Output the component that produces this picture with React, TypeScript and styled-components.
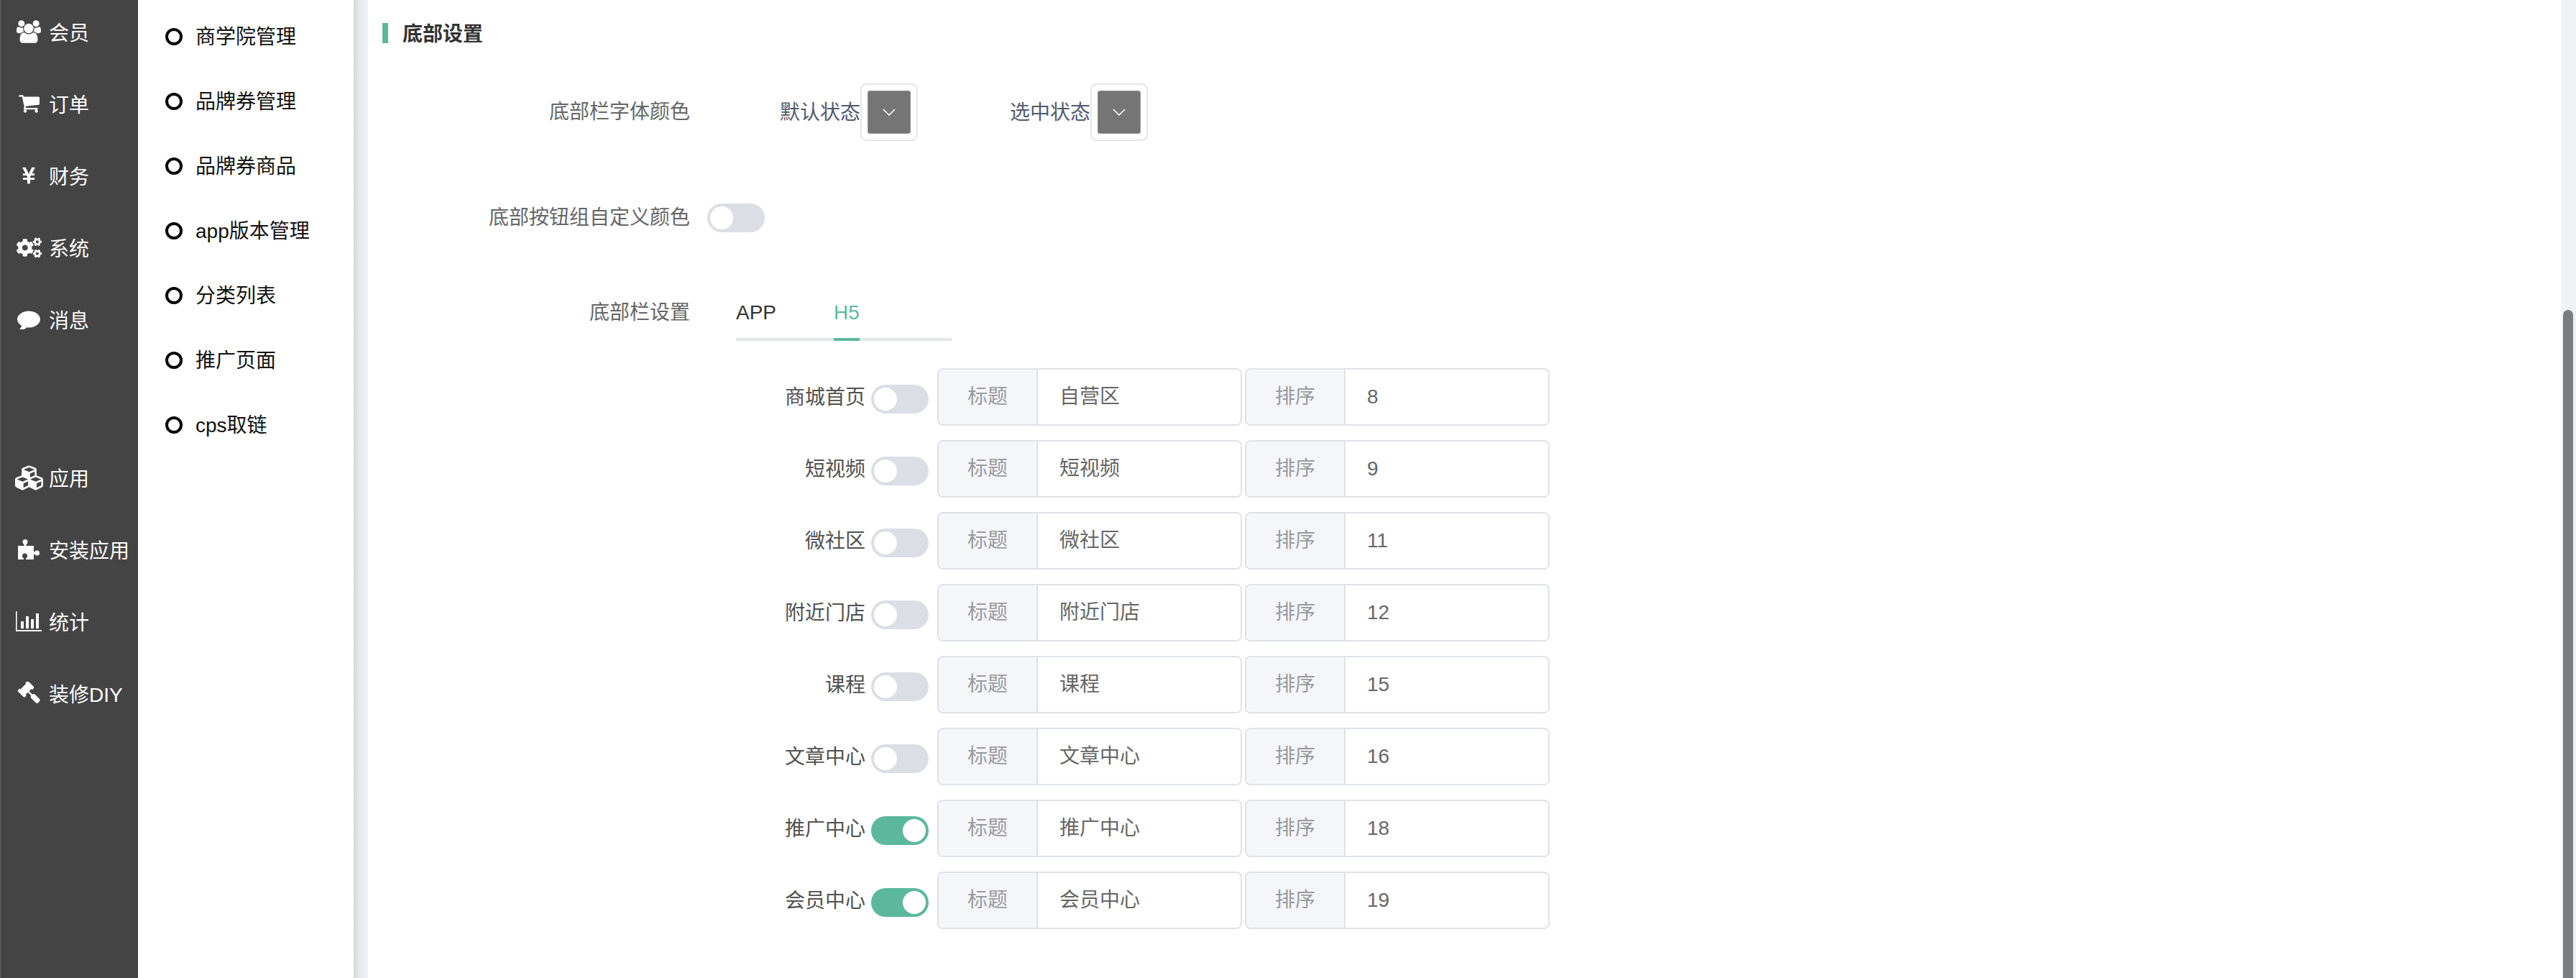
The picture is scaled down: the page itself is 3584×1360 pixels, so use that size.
import React from "react";
import styled, { createGlobalStyle } from "styled-components";
import { FaYenSign, FaCogs, FaCubes } from "react-icons/fa";

const GREEN = "#5bb89d";
const FONT = `"Liberation Sans", "Noto Sans CJK SC", sans-serif`;

const Global = createGlobalStyle`
  html, body { margin: 0; padding: 0; background: #fff; overflow: hidden; }
  * { box-sizing: border-box; }
  body { font-family: ${FONT}; font-size: 28px; }
`;

const Page = styled.div`
  display: flex;
  width: 3584px;
  height: 1360px;
  overflow: hidden;
`;

const Rail = styled.nav`
  flex: 0 0 192px;
  background: #444;
  border-left: 1px solid #666;
  color: #fff;
`;

const RailList = styled.div<{ $gap?: number }>`
  margin-top: ${(p) => p.$gap ?? -6}px;
`;

const RailItem = styled.div`
  display: flex;
  align-items: center;
  height: 100px;
  padding-left: 19px;
  font-size: 28px;
  white-space: nowrap;
`;

const RailIcon = styled.span`
  flex: 0 0 40px;
  display: flex;
  align-items: center;
  justify-content: center;
  margin-right: 8px;
  color: #fff;
`;

const SubNav = styled.nav`
  flex: 0 0 300px;
  background: #fff;
  padding-top: 6px;
`;

const SubItem = styled.div`
  display: flex;
  align-items: center;
  height: 90px;
  padding-left: 38px;
  color: #111;
  white-space: nowrap;
`;

const SubText = styled.span`
  position: relative;
  top: -2px;
`;

const Dot = styled.span`
  width: 24px;
  height: 24px;
  border: 4px solid #000;
  border-radius: 50%;
  margin-right: 18px;
`;

const Gutter = styled.div`
  flex: 0 0 20px;
  background: linear-gradient(90deg, #d6d8dc 0, #e7eaee 40%, #eef1f5 100%);
`;

const Main = styled.main`
  flex: 1;
  background: #fff;
  min-width: 0;
`;

const Title = styled.h2`
  margin: 32px 0 0 20px;
  height: 28px;
  line-height: 31px;
  border-left: 8px solid ${GREEN};
  padding-left: 20px;
  font-size: 28px;
  font-weight: 700;
  color: #333;
`;

const FormRow = styled.div<{ $top: number }>`
  display: flex;
  align-items: center;
  margin-top: ${(p) => p.$top}px;
`;

const FormLabel = styled.label<{ $tall?: boolean }>`
  flex: 0 0 448px;
  text-align: right;
  color: #666;
  white-space: nowrap;
  line-height: ${(p) => (p.$tall ? 50 : 40)}px;
  align-self: ${(p) => (p.$tall ? "flex-start" : "center")};
`;

const ColorGroup = styled.div`
  display: flex;
  align-items: center;
  margin-left: 125px;
  gap: 128px;
`;

const ColorItem = styled.div`
  display: flex;
  align-items: center;
  color: #515a6e;
  white-space: nowrap;
`;

const ColorName = styled.span`
  position: relative;
  top: -2px;
`;

const ColorBox = styled.div`
  width: 80px;
  height: 80px;
  border: 2px solid #e6e6e6;
  border-radius: 8px;
  padding: 8px;
`;

const ColorFill = styled.div`
  width: 60px;
  height: 60px;
  background: #757575;
  border: 1px solid #8f8f8f;
  border-radius: 3px;
  display: flex;
  align-items: center;
  justify-content: center;
`;

const Switch = styled.span<{ $on?: boolean }>`
  flex: 0 0 80px;
  width: 80px;
  height: 40px;
  border-radius: 20px;
  background: ${(p) => (p.$on ? GREEN : "#dbdee5")};
  display: flex;
  align-items: center;
  justify-content: ${(p) => (p.$on ? "flex-end" : "flex-start")};
  padding: 0 4px;
  &::after {
    content: "";
    width: 32px;
    height: 32px;
    border-radius: 50%;
    background: #fff;
  }
`;

const SwitchSlot = styled.div`
  margin-left: 24px;
  display: flex;
`;

const Tabs = styled.div`
  width: 300px;
  margin-left: 64px;
  height: 64px;
  display: flex;
  border-bottom: 4px solid #e3e5ea;
  gap: 80px;
`;

const Tab = styled.div<{ $active?: boolean }>`
  height: 64px;
  line-height: 50px;
  color: ${(p) => (p.$active ? GREEN : "#333")};
  border-bottom: 4px solid ${(p) => (p.$active ? GREEN : "transparent")};
`;

const Rows = styled.div`
  display: flex;
  flex-direction: column;
  gap: 20px;
  margin-top: 38px;
`;

const Row = styled.div`
  display: flex;
  align-items: center;
  height: 80px;
`;

const RowLabel = styled.span`
  flex: 0 0 692px;
  text-align: right;
  color: #515151;
  white-space: nowrap;
  position: relative;
  top: -2px;
`;

const RowSwitch = styled.span`
  margin: 6px 12px 0 8px;
  display: flex;
`;

const Group = styled.div`
  display: flex;
  width: 424px;
  height: 80px;
  border: 2px solid #dfe1e8;
  border-radius: 8px;
  overflow: hidden;
  & + & {
    margin-left: 4px;
  }
`;

const Addon = styled.span`
  flex: 0 0 138px;
  background: #f5f6fa;
  border-right: 2px solid #dfe1e8;
  color: #979aa0;
  text-align: center;
  line-height: 76px;
`;

const Field = styled.div`
  flex: 1;
  padding-left: 30px;
  color: #666;
  line-height: 76px;
  background: #fff;
`;

const Track = styled.div`
  flex: 0 0 20px;
  background: #eff2f6;
  padding: 431px 4px 0 2px;
`;

const Thumb = styled.div`
  height: 929px;
  background: #7b7c7f;
  border-radius: 7px 7px 0 0;
`;

const UsersIcon = () => (
  <svg width="34" height="32" viewBox="0 0 1920 1792" fill="#fff">
    <path d="M593 896q-162 5-265 128h-134q-82 0-138-40.500t-56-118.500q0-353 124-353 6 0 43.500 21t97.500 42.500 119 21.500q67 0 133-23-5 37-5 66 0 139 81 256zm1071 637q0 120-73 189.500t-194 69.500h-874q-121 0-194-69.500t-73-189.500q0-53 3.500-103.500t14-109 26.500-108.500 43-97.500 62-81 85.500-53.500 111.500-20q10 0 43 21.500t73 48 107 48 135 21.500 135-21.500 107-48 73-48 43-21.500q61 0 111.500 20t85.500 53.500 62 81 43 97.500 26.500 108.500 14 109 3.500 103.500zm-1024-1277q0 106-75 181t-181 75-181-75-75-181 75-181 181-75 181 75 75 181zm704 384q0 159-112.500 271.500t-271.500 112.500-271.500-112.500-112.500-271.500 112.500-271.500 271.500-112.500 271.500 112.500 112.500 271.500zm576 225q0 78-56 118.500t-138 40.500h-134q-103-123-265-128 81-117 81-256 0-29-5-66 66 23 133 23 59 0 119-21.500t97.500-42.500 43.500-21q124 0 124 353zm-128-609q0 106-75 181t-181 75-181-75-75-181 75-181 181-75 181 75 75 181z" />
  </svg>
);

const CartIcon = () => (
  <svg width="30" height="26" viewBox="0 192 1728 1472" fill="#fff">
    <path d="M704 1536q0 52-38 90t-90 38-90-38-38-90 38-90 90-38 90 38 38 90zm896 0q0 52-38 90t-90 38-90-38-38-90 38-90 90-38 90 38 38 90zm128-1088v512q0 24-16.500 42.500t-40.500 21.500l-1044 122q13 60 13 70 0 16-24 64h920q26 0 45 19t19 45-19 45-45 19h-1024q-26 0-45-19t-19-45q0-11 8-31.500t16-36 21.500-40 15.500-29.500l-177-823h-204q-26 0-45-19t-19-45 19-45 45-19h256q16 0 28.500 6.500t19.500 15.500 13 24.500 8 26 5.500 29.500 4.500 26h1201q26 0 45 19t19 45z" />
  </svg>
);

const CommentIcon = () => (
  <svg width="32" height="28" viewBox="0 128 1792 1536" fill="#fff">
    <path d="M1792 896q0 174-120 321.500t-326 233-450 85.500q-70 0-145-8-198 175-460 242-49 14-114 22-17 2-30.500-9t-17.500-29v-1q-3-4-.5-12t2-10 4.500-9.500l6-9 7-8.500 8-9q7-8 31-34.500t34.500-38 31-39.500 32.500-51 27-59 26-76q-157-89-247.500-220t-90.500-281q0-130 71-248.500t191-204.500 286-136.500 348-50.500q244 0 450 85.500t326 233 120 321.500z" />
  </svg>
);

const PuzzleIcon = () => (
  <svg width="30" height="28" viewBox="0 0 30 28">
    <g fill="#fff">
      <rect x="0" y="9" width="22" height="19" />
      <circle cx="10" cy="3.500" r="3.500" />
      <rect x="8.500" y="5" width="3" height="5" />
      <circle cx="26.500" cy="19" r="3.500" />
      <rect x="21" y="17.500" width="4" height="3" />
    </g>
    <g fill="#444">
      <circle cx="9.500" cy="23" r="3.500" />
      <rect x="8" y="24" width="3" height="4" />
    </g>
  </svg>
);

const ChartIcon = () => (
  <svg width="36" height="28" viewBox="0 0 36 28" fill="#fff">
    <path d="M0 0h1.600v26H36v2H0z" />
    <rect x="7" y="14" width="4" height="10" />
    <rect x="14" y="7" width="4" height="17" />
    <rect x="21" y="11" width="4" height="13" />
    <rect x="28" y="3" width="4" height="21" />
  </svg>
);

const GavelIcon = () => (
  <svg width="32" height="32" viewBox="0 0 1792 1792" fill="#fff">
    <path d="M1771 1440q0 53-37 90l-107 108q-39 37-91 37-53 0-90-37l-363-364q-38-36-38-90 0-53 43-96l-256-256-126 126q-14 14-34 14t-34-14q2 2 12.500 12t12.500 13 10 11.500 10 13.500 6 13.500 5.500 16.500 1.500 18q0 38-28 68-3 3-16.500 18t-19 20.500-18.500 16.500-22 15.500-22 9-26 4.500q-40 0-68-28l-408-408q-28-28-28-68 0-13 4.500-26t9-22 15.500-22 16.500-18.500 20.500-19 18-16.500q30-28 68-28 10 0 18 1.500t16.500 5.500 13.500 6 13.500 10 11.500 10 13 12.500 12 12.500q-14-14-14-34t14-34l348-348q14-14 34-14t34 14q-2-2-12.500-12t-12.500-13-10-11.500-10-13.500-6-13.500-5.500-16.500-1.500-18q0-38 28-68 3-3 16.500-18t19-20.500 18.500-16.500 22-15.500 22-9 26-4.500q40 0 68 28l408 408q28 28 28 68 0 13-4.500 26t-9 22-15.500 22-16.500 18.500-20.500 19-18 16.500q-30 28-68 28-10 0-18-1.500t-16.500-5.500-13.500-6-13.500-10-11.500-10-13-12.500-12-12.500q14 14 14 34t-14 34l-126 126 256 256q43-43 96-43 52 0 91 37l363 363q37 39 37 91z" />
  </svg>
);

const railTop = [
  { t: "会员", i: <UsersIcon /> },
  { t: "订单", i: <CartIcon /> },
  { t: "财务", i: <FaYenSign size={26} /> },
  { t: "系统", i: <FaCogs size={35} /> },
  { t: "消息", i: <CommentIcon /> },
];

const railBottom = [
  { t: "应用", i: <FaCubes size={39} /> },
  { t: "安装应用", i: <PuzzleIcon /> },
  { t: "统计", i: <ChartIcon /> },
  { t: "装修DIY", i: <GavelIcon /> },
];

const subs = ["商学院管理", "品牌券管理", "品牌券商品", "app版本管理", "分类列表", "推广页面", "cps取链"];

const rows = [
  { l: "商城首页", v: "自营区", n: "8" },
  { l: "短视频", v: "短视频", n: "9" },
  { l: "微社区", v: "微社区", n: "11" },
  { l: "附近门店", v: "附近门店", n: "12" },
  { l: "课程", v: "课程", n: "15" },
  { l: "文章中心", v: "文章中心", n: "16" },
  { l: "推广中心", v: "推广中心", n: "18", on: true },
  { l: "会员中心", v: "会员中心", n: "19", on: true },
];

const Chevron = () => (
  <svg width="18" height="10" viewBox="0 0 18 10" fill="none" stroke="#fff" strokeWidth="1.600">
    <path d="M1 1l8 8 8-8" />
  </svg>
);

export default function App() {
  return (
    <Page>
      <Global />
      <Rail>
        <RailList>
          {railTop.map((r) => (
            <RailItem key={r.t}>
              <RailIcon>{r.i}</RailIcon>
              {r.t}
            </RailItem>
          ))}
        </RailList>
        <RailList $gap={120}>
          {railBottom.map((r) => (
            <RailItem key={r.t}>
              <RailIcon>{r.i}</RailIcon>
              {r.t}
            </RailItem>
          ))}
        </RailList>
      </Rail>
      <SubNav>
        {subs.map((s) => (
          <SubItem key={s}>
            <Dot />
            <SubText>{s}</SubText>
          </SubItem>
        ))}
      </SubNav>
      <Gutter />
      <Main>
        <Title>底部设置</Title>
        <FormRow $top={56}>
          <FormLabel>底部栏字体颜色</FormLabel>
          <ColorGroup>
            <ColorItem>
              <ColorName>默认状态</ColorName>
              <ColorBox>
                <ColorFill>
                  <Chevron />
                </ColorFill>
              </ColorBox>
            </ColorItem>
            <ColorItem>
              <ColorName>选中状态</ColorName>
              <ColorBox>
                <ColorFill>
                  <Chevron />
                </ColorFill>
              </ColorBox>
            </ColorItem>
          </ColorGroup>
        </FormRow>
        <FormRow $top={87}>
          <FormLabel>底部按钮组自定义颜色</FormLabel>
          <SwitchSlot>
            <Switch />
          </SwitchSlot>
        </FormRow>
        <FormRow $top={87}>
          <FormLabel $tall>底部栏设置</FormLabel>
          <Tabs>
            <Tab>APP</Tab>
            <Tab $active>H5</Tab>
          </Tabs>
        </FormRow>
        <Rows>
          {rows.map((r) => (
            <Row key={r.l}>
              <RowLabel>{r.l}</RowLabel>
              <RowSwitch>
                <Switch $on={r.on} />
              </RowSwitch>
              <Group>
                <Addon>标题</Addon>
                <Field>{r.v}</Field>
              </Group>
              <Group>
                <Addon>排序</Addon>
                <Field>{r.n}</Field>
              </Group>
            </Row>
          ))}
        </Rows>
      </Main>
      <Track>
        <Thumb />
      </Track>
    </Page>
  );
}
